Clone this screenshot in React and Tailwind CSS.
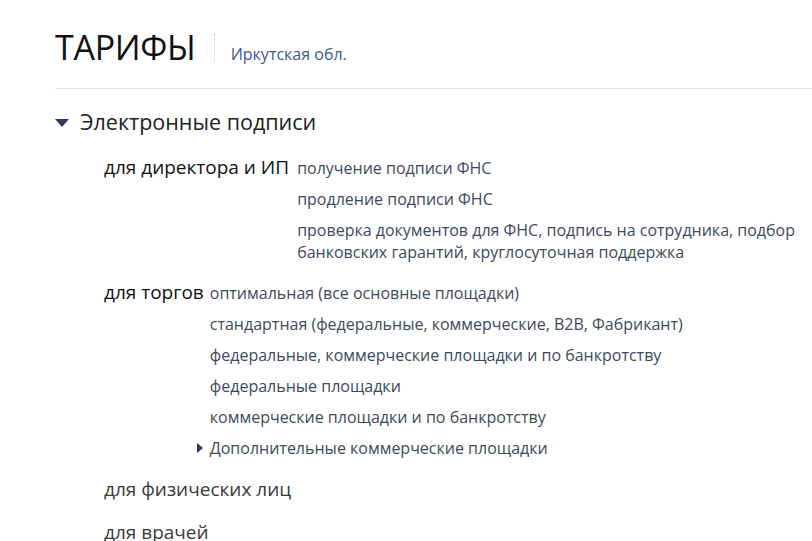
export default function App() {
  const font = { fontFamily: '"Open Sans", "Noto Sans", sans-serif' };
  const Item = ({ children }) => (
    <div className="text-[16px] leading-[22px] text-[#3d4a5e]">{children}</div>
  );
  return (
    <div className="w-[812px] h-[541px] overflow-hidden bg-white" style={font}>
      <div className="pl-[55px] pt-[26px]">
        <div className="flex items-end pb-[20px] border-b border-[#e3e3e3]">
          <h1 className="text-[34px] leading-[42px] text-[#111] font-normal tracking-[-0.3px]">ТАРИФЫ</h1>
          <div className="ml-[18px] mb-[6px] h-[28px] border-l border-dotted border-[#cfcfcf]"></div>
          <a className="ml-[16px] mb-[3px] text-[16px] leading-[22px] text-[#3a5a8f]">Иркутская обл.</a>
        </div>
        <div className="pt-[18px]">
          <div className="flex items-center gap-[11px]">
            <svg width="14" height="8" viewBox="0 0 14 8" className="mt-[1px]">
              <polygon points="0,0 14,0 7,8" fill="#2e3a66" />
            </svg>
            <div className="text-[21.5px] leading-[30px] text-[#222]">Электронные подписи</div>
          </div>
          <div className="pl-[49px] pt-[20px] flex flex-col">
            <div className="flex gap-[8px]">
              <div className="text-[19px] leading-[24px] text-[#111] -mt-[2px]">для директора и ИП</div>
              <div className="flex flex-col gap-[9px]">
                <Item>получение подписи ФНС</Item>
                <Item>продление подписи ФНС</Item>
                <Item>
                  проверка документов для ФНС, подпись на сотрудника, подбор
                  <br />
                  банковских гарантий, круглосуточная поддержка
                </Item>
              </div>
            </div>
            <div className="flex gap-[6px] mt-[19px]">
              <div className="text-[19px] leading-[24px] text-[#111] -mt-[2px]">для торгов</div>
              <div className="flex flex-col gap-[9px]">
                <Item>оптимальная (все основные площадки)</Item>
                <Item>стандартная (федеральные, коммерческие, B2B, Фабрикант)</Item>
                <Item>федеральные, коммерческие площадки и по банкротству</Item>
                <Item>федеральные площадки</Item>
                <Item>коммерческие площадки и по банкротству</Item>
                <div className="relative">
                  <svg width="6" height="10" viewBox="0 0 6 10" className="absolute -left-[13px] top-[6px]">
                    <polygon points="0,0 6,5 0,10" fill="#2e3a66" />
                  </svg>
                  <Item>Дополнительные коммерческие площадки</Item>
                </div>
              </div>
            </div>
            <div className="text-[19px] leading-[24px] text-[#3a3a3a] mt-[18px]">для физических лиц</div>
            <div className="text-[19px] leading-[24px] text-[#3a3a3a] mt-[19px]">для врачей</div>
          </div>
        </div>
      </div>
    </div>
  );
}
